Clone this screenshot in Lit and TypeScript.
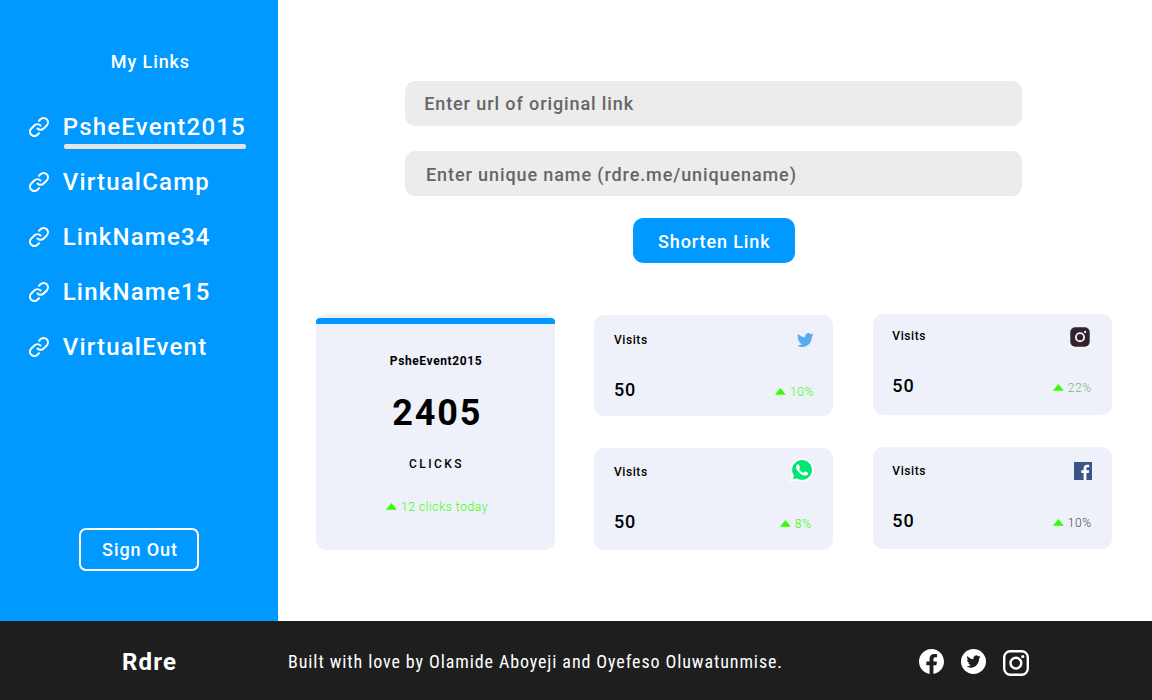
import { LitElement, html, css, svg } from "lit";
import { customElement, property } from "lit/decorators.js";
import { classMap } from "lit/directives/class-map.js";

const BIRD =
  "M23.953 4.57a10 10 0 01-2.825.775 4.958 4.958 0 002.163-2.723c-.951.555-2.005.959-3.127 1.184a4.92 4.92 0 00-8.384 4.482C7.69 8.095 4.067 6.13 1.64 3.162a4.822 4.822 0 00-.666 2.475c0 1.71.87 3.213 2.188 4.096a4.904 4.904 0 01-2.228-.616v.06a4.923 4.923 0 003.946 4.827 4.996 4.996 0 01-2.212.085 4.936 4.936 0 004.604 3.417 9.867 9.867 0 01-6.102 2.105c-.39 0-.779-.023-1.17-.067a13.995 13.995 0 007.557 2.209c9.053 0 13.998-7.496 13.998-13.985 0-.21 0-.42-.015-.63A9.935 9.935 0 0024 4.59z";

const chainIcon = html`<svg class="chain" width="24" height="24" viewBox="0 0 24 24" fill="none" stroke="#fff" stroke-width="2" stroke-linecap="round" stroke-linejoin="round">
  <path d="M13.544 10.456a4.368 4.368 0 0 0-6.176 0l-3.089 3.088a4.367 4.367 0 1 0 6.176 6.176L12 18.175" />
  <path d="M10.456 13.544a4.367 4.367 0 0 0 6.176 0l3.088-3.088a4.367 4.367 0 1 0-6.176-6.176L12 5.825" />
</svg>`;

const triangle = html`<svg class="tri" width="11" height="7" viewBox="0 0 11 7"><path fill="#3f0" d="M5.4 0 10.8 6.7H0z" /></svg>`;

const networkIcons: Record<string, unknown> = {
  twitter: html`<svg class="icon" width="16.6" height="14" viewBox="0 2.2 24 19.6" preserveAspectRatio="none"><path fill="#55acee" d=${BIRD} /></svg>`,
  whatsapp: html`<svg class="icon" width="24" height="24" viewBox="0 0 24 24">
    <path fill="#fff" d="M.057 24l1.687-6.163a11.867 11.867 0 01-1.587-5.946C.16 5.335 5.495 0 12.05 0a11.817 11.817 0 018.413 3.488 11.824 11.824 0 013.48 8.414c-.003 6.557-5.338 11.892-11.893 11.892a11.9 11.9 0 01-5.688-1.448L.057 24z" />
    <path fill="#00e676" d="M6.654 20.193c1.676.995 3.276 1.591 5.392 1.592 5.448 0 9.886-4.434 9.889-9.885.002-5.462-4.415-9.89-9.881-9.892-5.452 0-9.887 4.434-9.889 9.884-.001 2.225.651 3.891 1.746 5.634l-.999 3.648 3.742-.981z" />
    <path fill="#fff" d="M17.472 14.382c-.297-.149-1.758-.867-2.03-.967-.273-.099-.471-.148-.67.15-.197.297-.767.966-.94 1.164-.173.199-.347.223-.644.075-.297-.15-1.255-.463-2.39-1.475-.883-.788-1.48-1.761-1.653-2.059-.173-.297-.018-.458.13-.606.134-.133.298-.347.446-.52.149-.174.198-.298.298-.497.099-.198.05-.371-.025-.52-.075-.149-.669-1.612-.916-2.207-.242-.579-.487-.5-.669-.51-.173-.008-.371-.01-.57-.01-.198 0-.52.074-.792.372-.272.297-1.04 1.016-1.04 2.479 0 1.462 1.065 2.875 1.213 3.074.149.198 2.096 3.2 5.077 4.487.709.306 1.262.489 1.694.625.712.227 1.36.195 1.871.118.571-.085 1.758-.719 2.006-1.413.248-.694.248-1.289.173-1.413-.074-.124-.272-.198-.57-.347" />
  </svg>`,
  instagram: html`<svg class="icon" width="20" height="20" viewBox="0 0 20 20">
    <rect x=".3" y=".3" width="19.4" height="19.4" rx="5" fill="#33222c" />
    <circle cx="10" cy="10.2" r="4.1" fill="none" stroke="#eef1f9" stroke-width="1.9" />
    <circle cx="15.1" cy="5" r="1.15" fill="#eef1f9" />
  </svg>`,
  facebook: html`<svg class="icon" width="18" height="18" viewBox="0 0 24 24">
    <rect width="24" height="24" fill="#3d5487" />
    <path fill="#fff" d="M12.818 24v-9.294H9.689v-3.621h3.129V8.41c0-3.099 1.894-4.785 4.659-4.785 1.325 0 2.464.097 2.796.141v3.24h-1.921c-1.5 0-1.792.721-1.792 1.771v2.311h3.584l-.465 3.63H16.56V24z" />
  </svg>`,
};

@customElement("visit-card")
class VisitCard extends LitElement {
  @property() network = "";
  @property() change = "";
  @property({ type: Number }) visits = 0;

  static styles = css`
    :host { display: block; color: #000; }
    div, span { letter-spacing: 0.05em; }
    .card { box-sizing: border-box; height: 101.3px; border-radius: 10px; background: #eef1f9; padding-left: 19.5px; }
    .row { display: flex; justify-content: space-between; align-items: flex-start; }
    .head { height: 14px; }
    .label { font-size: 12px; line-height: 14px; font-weight: 500; }
    .body { margin-top: 32px; height: 21px; }
    .count { font-size: 18px; line-height: 21px; font-weight: 500; }
    .trend { display: flex; align-items: flex-start; gap: 4px; margin-top: 6px; font-size: 12px; line-height: 14px; font-weight: 300; color: #3f0; }
    .tri { display: block; margin-top: 3px; }
    .icon { display: block; flex: none; }
    .twitter { padding-top: 18px; padding-right: 19.5px; }
    .whatsapp { padding-top: 16.5px; padding-right: 22px; }
    .whatsapp .icon { margin: -7px -2.8px 0 0; }
    .instagram { padding-top: 15px; padding-right: 20px; }
    .instagram .icon { margin: -2px 2px 0 0; }
    .instagram .trend { color: #80b480; }
    .facebook { padding-top: 17.2px; padding-right: 20px; }
    .facebook .icon { margin-top: -2.5px; }
    .facebook .trend { color: #3d4a3d; }
  `;

  render() {
    return html`<div class=${classMap({ card: true, [this.network]: true })}>
      <div class="row head"><span class="label">Visits</span>${networkIcons[this.network]}</div>
      <div class="row body">
        <span class="count">${this.visits}</span>
        <span class="trend">${triangle}<span>${this.change}</span></span>
      </div>
    </div>`;
  }
}

@customElement("app-root")
class AppRoot extends LitElement {
  private links = ["PsheEvent2015", "VirtualCamp", "LinkName34", "LinkName15", "VirtualEvent"];

  static styles = css`
    :host { display: flex; flex-direction: column; width: 1152px; height: 700px; overflow: hidden; background: #fff; font-family: Roboto, sans-serif; color: #000; }
    div, span { letter-spacing: 0.05em; }
    .top { display: flex; height: 621px; }
    .sidebar { box-sizing: border-box; width: 278px; padding: 51px 0 50px; background: #0099ff; color: #fff; display: flex; flex-direction: column; font-weight: 500; }
    .title { padding-left: 110.8px; font-size: 18px; line-height: 21px; }
    .links { display: flex; flex-direction: column; gap: 27px; margin-top: 41px; padding-left: 27px; }
    .link { display: flex; align-items: center; gap: 11.7px; height: 28px; font-size: 24px; line-height: 28px; }
    .name { position: relative; white-space: nowrap; }
    .active::after { content: ""; position: absolute; left: 1.3px; top: 31.4px; width: 182px; height: 4.2px; border-radius: 2px; background: #e5e5e5; }
    .signout { box-sizing: border-box; width: 120.5px; height: 43px; margin: auto 0 0 78.8px; padding: 9px 0 0 21.3px; border: 2px solid #fff; border-radius: 7px; font-size: 18px; line-height: 21px; }
    .main { flex: 1; display: flex; flex-direction: column; }
    .form { display: flex; flex-direction: column; align-items: flex-start; padding: 81px 0 0 127px; font-size: 18px; line-height: 21px; font-weight: 500; }
    .field { box-sizing: border-box; width: 617px; height: 45px; border-radius: 10px; background: #ececec; color: #666; padding: 12px 0 0 19.2px; }
    .field.name-field { margin-top: 25px; padding: 13px 0 0 21px; }
    .shorten { box-sizing: border-box; width: 162px; height: 45px; margin: 22px 0 0 228px; padding: 13px 0 0 25px; border-radius: 10px; background: #0099ff; color: #fff; }
    .stats { display: flex; align-items: flex-start; gap: 39.4px; margin-top: 51px; padding-left: 38px; }
    .total { box-sizing: border-box; width: 239px; height: 235.6px; padding-top: 4.4px; border-radius: 10px; background: #eef1f9; display: flex; flex-direction: column; align-items: center; }
    .bar { width: 239px; height: 5.4px; border-radius: 4px 4px 0 0; background: #0099ff; }
    .total-name { margin-top: 30.2px; padding-left: 1px; font-size: 12px; line-height: 14px; font-weight: 700; }
    .total-count { margin-top: 24px; padding-left: 3.4px; font-size: 36px; line-height: 42px; font-weight: 700; }
    .total-unit { margin-top: 23px; padding-left: 2px; font-size: 12px; line-height: 14px; font-weight: 500; letter-spacing: 0.2em; }
    .today { display: flex; gap: 4px; margin-top: 29px; padding-left: 3px; font-size: 12px; line-height: 14px; font-weight: 300; color: #3f0; }
    .tri { display: block; margin-top: 3px; }
    .col { width: 239px; display: flex; flex-direction: column; gap: 32px; padding-top: 1px; }
    .col.last { padding-top: 0; }
    .footer { box-sizing: border-box; height: 79px; padding: 27px 123px 0 122px; background: #1e1e1e; color: #fff; display: flex; align-items: flex-start; }
    .brand { font-size: 24px; line-height: 28px; font-weight: 700; }
    .credit { margin: 3px 0 0 110.8px; font-family: "Roboto Condensed", Roboto, sans-serif; font-size: 18px; line-height: 21px; white-space: nowrap; }
    .social { display: flex; align-items: flex-start; margin-left: auto; }
    .fb { display: block; margin-top: 0.6px; }
    .tw { display: block; margin: 0.5px 0 0 16.9px; }
    .ig { display: block; margin: 1.8px 0 0 17.3px; }
  `;

  render() {
    return html`
      <div class="top">
        <nav class="sidebar">
          <div class="title">My Links</div>
          <div class="links">
            ${this.links.map((name, i) => html`<div class="link">${chainIcon}<span class=${classMap({ name: true, active: i === 0 })}>${name}</span></div>`)}
          </div>
          <div class="signout">Sign Out</div>
        </nav>
        <main class="main">
          <div class="form">
            <div class="field">Enter url of original link</div>
            <div class="field name-field">Enter unique name (rdre.me/uniquename)</div>
            <div class="shorten">Shorten Link</div>
          </div>
          <div class="stats">
            <div class="total">
              <div class="bar"></div>
              <div class="total-name">PsheEvent2015</div>
              <div class="total-count">2405</div>
              <div class="total-unit">CLICKS</div>
              <div class="today">${triangle}<span>12 clicks today</span></div>
            </div>
            <div class="col">
              <visit-card network="twitter" visits="50" change="10%"></visit-card>
              <visit-card network="whatsapp" visits="50" change="8%"></visit-card>
            </div>
            <div class="col last">
              <visit-card network="instagram" visits="50" change="22%"></visit-card>
              <visit-card network="facebook" visits="50" change="10%"></visit-card>
            </div>
          </div>
        </main>
      </div>
      <footer class="footer">
        <span class="brand">Rdre</span>
        <span class="credit">Built with love by Olamide Aboyeji and Oyefeso Oluwatunmise.</span>
        <div class="social">
          <svg class="fb" width="25" height="25" viewBox="0 0 24 24"><path fill="#fff" d="M24 12.073c0-6.627-5.373-12-12-12s-12 5.373-12 12c0 5.99 4.388 10.954 10.125 11.854v-8.385H7.078v-3.47h3.047V9.43c0-3.007 1.792-4.669 4.533-4.669 1.312 0 2.686.235 2.686.235v2.953H15.83c-1.491 0-1.956.925-1.956 1.874v2.25h3.328l-.532 3.47h-2.796v8.385C19.612 23.027 24 18.062 24 12.073z" /></svg>
          <svg class="tw" width="25" height="25" viewBox="0 0 25 25"><circle cx="12.5" cy="12.5" r="12.5" fill="#fff" /><g transform="translate(5.5 4.9) scale(.585 .635)">${svg`<path fill="#1e1e1e" d=${BIRD} />`}</g></svg>
          <svg class="ig" width="26" height="26" viewBox="0 0 26 26" fill="none" stroke="#fff" stroke-width="2.4"><rect x="1.2" y="1.2" width="23.6" height="23.6" rx="6.2" /><circle cx="12.9" cy="13.1" r="5.4" /><circle cx="19.8" cy="6.5" r="1.6" fill="#fff" stroke="none" /></svg>
        </div>
      </footer>
    `;
  }
}
